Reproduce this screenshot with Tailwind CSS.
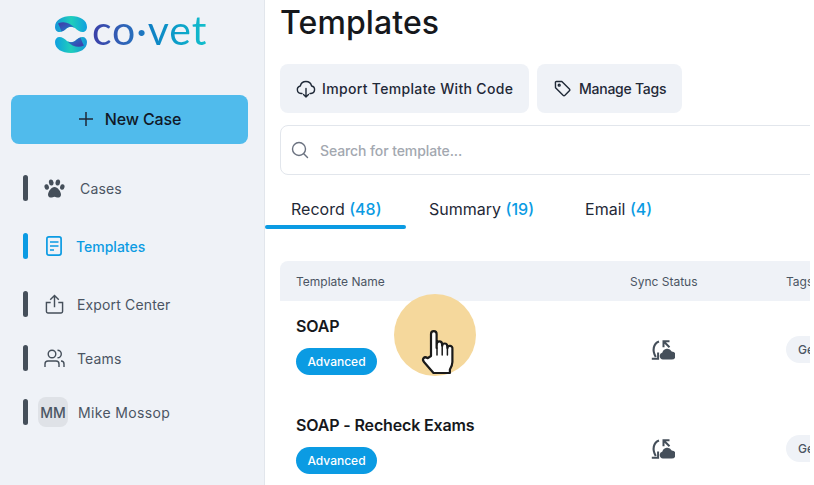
<!DOCTYPE html>
<html lang="en">
  <head>
    <meta charset="UTF-8" />
    <title>Templates</title>
    <script src="https://cdn.jsdelivr.net/npm/@tailwindcss/browser@4"></script>
  </head>
  <body class="bg-white">
    <div class="relative flex w-[814px] h-[485px] overflow-hidden font-['Inter',sans-serif]">
      <!-- Sidebar -->
      <aside class="w-[265px] h-full shrink-0 bg-[#eff2f7] border-r border-[#e2e6ec] pt-[15px]">
        <div class="flex items-center h-[38px] pl-[55px] gap-[5px]">
          <svg width="32" height="37" viewBox="0 0 32 37">
            <defs>
              <linearGradient id="band" x1="0" y1="0.5" x2="1" y2="0.5">
                <stop offset="0" stop-color="#1495da" />
                <stop offset="0.5" stop-color="#20cfbb" />
                <stop offset="1" stop-color="#0e9fe0" />
              </linearGradient>
              <linearGradient id="fold" x1="0" y1="0" x2="1" y2="1">
                <stop offset="0.2" stop-color="#3c44ad" />
                <stop offset="1" stop-color="#1a86d2" />
              </linearGradient>
            </defs>
            <g id="logo-top">
              <path d="M0 11C0 4 7 0 16 0s16 4 16 11c0 3-2 5-4.500 5-2.500 0-5.500-2-7.500-4-2-1.500-6-1.500-8 0-2 2-5 4-7.500 4C2 16 0 14 0 11z" fill="url(#band)" />
              <path d="M3 7.500C9 4.500 15 7 19.500 11.600c-2.500-1.200-5.500-1-7.500.4-1.500 1.500-3.500 3-5.500 3.600C5.500 13 4.500 10 3 7.500z" fill="url(#fold)" />
            </g>
            <g transform="rotate(180 16 18.500)">
              <path d="M0 11C0 4 7 0 16 0s16 4 16 11c0 3-2 5-4.500 5-2.500 0-5.500-2-7.500-4-2-1.500-6-1.500-8 0-2 2-5 4-7.500 4C2 16 0 14 0 11z" fill="url(#band)" />
              <path d="M3 7.500C9 4.500 15 7 19.500 11.600c-2.500-1.200-5.500-1-7.500.4-1.500 1.500-3.500 3-5.500 3.600C5.500 13 4.500 10 3 7.500z" fill="url(#fold)" />
            </g>
          </svg>
          <span class="mb-[9px] font-['Lato',sans-serif] font-normal text-[41px] leading-none tracking-[0.9px] bg-gradient-to-r from-[#3a3fa8] via-[#0f7fc4] to-[#14c0cc] bg-clip-text text-transparent">co·vet</span>
        </div>

        <button class="flex items-center justify-center gap-[11px] ml-[11px] mt-[42px] pb-[1px] w-[237px] h-[49px] rounded-lg bg-[#50bbec] text-[#111827] text-[16px] tracking-[-0.15px] font-medium">
          <svg width="16" height="16" viewBox="0 0 16 16" fill="none" stroke="#1f2937" stroke-width="1.500"><path d="M8 1v14M1 8h14" /></svg>
          New Case
        </button>

        <nav class="mt-[31px] ml-[23px] flex flex-col text-[14px] tracking-[0.15px] text-[#4b5563]">
          <a class="flex items-center h-[26px]">
            <span class="w-[5px] h-[26px] rounded-full bg-[#454f5a]"></span>
            <svg class="ml-[16px]" width="21" height="19" viewBox="0 0 21 19" fill="#454f5a">
              <ellipse cx="2.700" cy="8" rx="2.200" ry="2.800" transform="rotate(-15 2.700 8)" />
              <ellipse cx="7.200" cy="3.500" rx="2.300" ry="3" transform="rotate(-8 7.200 3.500)" />
              <ellipse cx="13.800" cy="3.500" rx="2.300" ry="3" transform="rotate(8 13.800 3.500)" />
              <ellipse cx="18.300" cy="8" rx="2.200" ry="2.800" transform="rotate(15 18.300 8)" />
              <path d="M10.500 8c3 0 6.500 4.500 6.500 7.700 0 2.200-1.700 2.800-3 2.800-1.500 0-2.200-.8-3.500-.8S8.500 18.500 7 18.500c-1.300 0-3-.6-3-2.800C4 12.500 7.500 8 10.500 8z" />
            </svg>
            <span class="ml-[15px]">Cases</span>
          </a>
          <a class="flex items-center h-[26px] mt-[32px] text-[#0b9be3] font-medium tracking-normal">
            <span class="w-[5px] h-[26px] rounded-full bg-[#0b9be3]"></span>
            <svg class="ml-[18px]" width="16" height="20" viewBox="0 0 16 20" fill="none" stroke="#0b9be3" stroke-width="1.700">
              <rect x="0.900" y="0.900" width="14.200" height="18.200" rx="2" />
              <path d="M4 6h8.500M4 10h8.500M4 14h4" />
            </svg>
            <span class="ml-[14px]">Templates</span>
          </a>
          <a class="flex items-center h-[26px] mt-[32px]">
            <span class="w-[5px] h-[26px] rounded-full bg-[#454f5a]"></span>
            <svg class="ml-[17px]" width="19" height="20" viewBox="0 0 20 21" fill="none" stroke="#454f5a" stroke-width="1.500">
              <path d="M10 14V1.500M5.500 6 10 1.500 14.500 6" />
              <path d="M6 9H1.500v9.500a1.500 1.500 0 0 0 1.500 1.500h14a1.500 1.500 0 0 0 1.500-1.500V9H14" />
            </svg>
            <span class="ml-[13px]">Export Center</span>
          </a>
          <a class="flex items-center h-[26px] mt-[28px]">
            <span class="w-[5px] h-[26px] rounded-full bg-[#454f5a]"></span>
            <svg class="ml-[16px]" width="21" height="19" viewBox="0 0 21 19" fill="none" stroke="#454f5a" stroke-width="1.400">
              <circle cx="8" cy="5" r="3.800" />
              <path d="M1 18v-3a3 3 0 0 1 3-3h8a3 3 0 0 1 3 3v3" />
              <path d="M13.500 1.200a3.800 3.800 0 0 1 0 7.600M17 12a3 3 0 0 1 3 3v3" />
            </svg>
            <span class="ml-[12px]">Teams</span>
          </a>
          <a class="flex items-center h-[26px] mt-[28px]">
            <span class="w-[5px] h-[26px] rounded-full bg-[#454f5a]"></span>
            <span class="ml-[10px] w-[30px] h-[30px] rounded-lg bg-[#dfe2e7] flex items-center justify-center text-[14px] font-medium tracking-normal">MM</span>
            <span class="ml-[10px] tracking-[0.35px]">Mike Mossop</span>
          </a>
        </nav>
      </aside>

      <!-- Main, the page is cut off 4px short of the window edge -->
      <main class="w-[545px] h-full shrink-0 overflow-hidden">
        <h1 class="ml-[15px] text-[32px] leading-[39px] mt-[3px] tracking-[0.1px] font-medium text-[#16181c]">Templates</h1>
        <div class="ml-[15px] mt-[22px] flex gap-[8px]">
          <button class="flex items-center gap-[6px] w-[249px] h-[49px] pl-[16px] rounded-lg bg-[#eff2f7] text-[14px] tracking-[0.33px] font-medium text-[#1f2937]">
            <svg width="20" height="20" viewBox="0 0 20 20" fill="none" stroke="#1f2937" stroke-width="1.400" stroke-linecap="round" stroke-linejoin="round">
              <path d="M6 14.500H5a3.800 3.800 0 0 1-.7-7.500 5.800 5.800 0 0 1 11.300 0A3.800 3.800 0 0 1 15 14.500h-1" />
              <path d="M10 9.500V18M7.500 15.500 10 18l2.500-2.500" />
            </svg>
            Import Template With Code
          </button>
          <button class="flex items-center gap-[8px] w-[145px] h-[49px] pl-[17px] rounded-lg bg-[#eff2f7] text-[14px] tracking-[-0.25px] font-medium text-[#1f2937]">
            <svg width="17" height="17" viewBox="0 0 18 18" fill="none" stroke="#1f2937" stroke-width="1.500" stroke-linejoin="round">
              <path d="M1.500 2.500a1 1 0 0 1 1-1h5.800l8 8a1.500 1.500 0 0 1 0 2l-4.700 4.700a1.500 1.500 0 0 1-2 0l-8-8z" />
              <circle cx="5.500" cy="5.500" r="1" />
            </svg>
            Manage Tags
          </button>
        </div>

        <div class="ml-[15px] mt-[12px] w-[600px] h-[50px] border border-[#e2e6ec] rounded-lg flex items-center pl-[10px] gap-[11px]">
          <svg width="18" height="18" viewBox="0 0 18 18" fill="none" stroke="#6b7280" stroke-width="1.400" stroke-linecap="round">
            <circle cx="8" cy="8" r="6.500" /><path d="m13 13 3.500 3.500" />
          </svg>
          <span class="text-[14px] tracking-[-0.1px] font-medium text-[#a3a8b0]">Search for template...</span>
        </div>

        <div class="mt-[20px] flex text-[16px] text-[#1f2937]">
          <div class="w-[141px]">
            <div class="pl-[26px] leading-[28px]">Record <span class="text-[#0b9be3] font-medium">(48)</span></div>
            <div class="mt-[2px] h-[4px] rounded-full bg-[#0b9be3]"></div>
          </div>
          <div class="ml-[23px] leading-[28px]">Summary <span class="text-[#0b9be3] font-medium">(19)</span></div>
          <div class="ml-[51px] leading-[28px]">Email <span class="text-[#0b9be3] font-medium">(4)</span></div>
        </div>

        <div class="ml-[15px] mt-[32px] w-[600px]">
          <div class="grid grid-cols-[334px_156px_1fr] h-[40px] pt-[1px] items-center bg-[#eff2f7] rounded-t-lg text-[12px] text-[#4b5563] pl-[16px]">
            <span>Template Name</span>
            <span>Sync Status</span>
            <span>Tags</span>
          </div>
          <div class="grid grid-cols-[334px_156px_1fr] h-[113px] items-start pl-[16px]">
            <div class="pt-[14px]">
              <div class="text-[16px] font-semibold tracking-[-0.15px] leading-[22px] text-[#16181c]">SOAP</div>
              <span class="mt-[11px] flex items-center justify-center w-[81px] h-[27px] rounded-full bg-[#0b9be3] text-white text-[12px] font-medium">Advanced</span>
            </div>
            <svg class="mt-[39px] ml-[21px]" width="24" height="20" viewBox="0 0 24 20">
              <path d="M8 1.500C2.500 3.500 .8 10.500 4.800 17" fill="none" stroke="#454f5a" stroke-width="2.100" />
              <path d="M.8 18.800h6.300v-6.200" fill="none" stroke="#454f5a" stroke-width="2" />
              <path d="M18.500 1.200h-6v6M12.500 1.200l6 6" fill="none" stroke="#454f5a" stroke-width="2" />
              <path d="M12 19.500a3.500 3.500 0 0 1-.6-6.900 5 5 0 0 1 9.300-1.100 3.900 3.900 0 0 1-.2 8z" fill="#454f5a" />
            </svg>
            <span class="mt-[35px] flex w-[60px] h-[27px] rounded-full bg-[#eff2f7] text-[12px] text-[#4b5563] font-medium items-center pl-[12px]">General</span>
          </div>
          <div class="grid grid-cols-[334px_156px_1fr] h-[71px] items-start pl-[16px]">
            <div>
              <div class="text-[16px] font-semibold tracking-[-0.15px] leading-[22px] text-[#16181c]">SOAP - Recheck Exams</div>
              <span class="mt-[11px] flex items-center justify-center w-[81px] h-[27px] rounded-full bg-[#0b9be3] text-white text-[12px] font-medium">Advanced</span>
            </div>
            <svg class="mt-[25px] ml-[21px]" width="24" height="20" viewBox="0 0 24 20">
              <path d="M8 1.500C2.500 3.500 .8 10.500 4.800 17" fill="none" stroke="#454f5a" stroke-width="2.100" />
              <path d="M.8 18.800h6.300v-6.200" fill="none" stroke="#454f5a" stroke-width="2" />
              <path d="M18.500 1.200h-6v6M12.500 1.200l6 6" fill="none" stroke="#454f5a" stroke-width="2" />
              <path d="M12 19.500a3.500 3.500 0 0 1-.6-6.900 5 5 0 0 1 9.300-1.100 3.900 3.900 0 0 1-.2 8z" fill="#454f5a" />
            </svg>
            <span class="mt-[21px] flex w-[60px] h-[27px] rounded-full bg-[#eff2f7] text-[12px] text-[#4b5563] font-medium items-center pl-[12px]">General</span>
          </div>
        </div>
      </main>

      <!-- Recorded cursor highlight -->
      <div class="absolute left-[394px] top-[294px] w-[82px] h-[82px] rounded-full bg-[#f5d89c]"></div>
      <svg class="absolute left-[420px] top-[329px]" width="36" height="46" viewBox="0 0 36 46" fill="#fff" stroke="#1a1a1a" stroke-width="2.200" stroke-linejoin="round" stroke-linecap="round">
        <path d="M11 27V5a2.800 2.800 0 0 1 5.600 0v14l.2-4a2.600 2.600 0 0 1 5.200 0l.2 2a2.500 2.500 0 0 1 5 0l.2 2a2.500 2.500 0 0 1 5 .8V33c0 3-1 5-2.500 7.500V44H13.500L4 33c-1-1.200-1.500-2.500-.5-3.800 1-1.200 2.500-1.200 4 0z" />
        <path d="M17 19v7M22.200 18v8M27.400 19v7" stroke-width="1.500" />
      </svg>
    </div>
  </body>
</html>
